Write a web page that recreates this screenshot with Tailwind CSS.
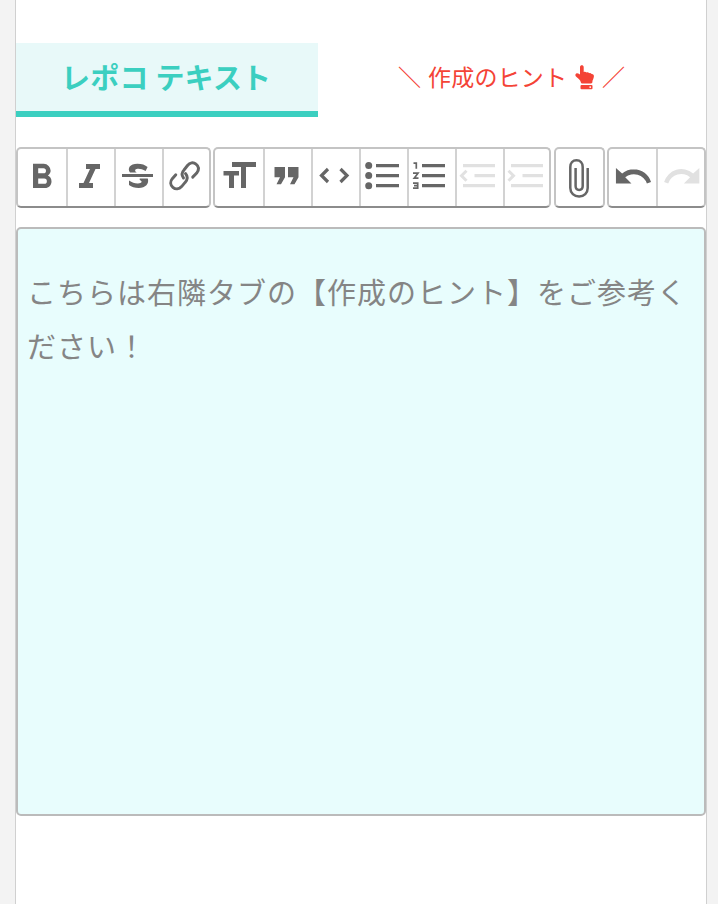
<!DOCTYPE html>
<html lang="ja">
<head>
<meta charset="utf-8">
<title>レポコ テキスト</title>
<script src="https://cdn.jsdelivr.net/npm/@tailwindcss/browser@4"></script>
</head>
<body class="bg-[#f3f3f3] font-['Noto_Sans_CJK_JP',sans-serif]">
<main class="ml-[15px] w-[692px] h-[904px] overflow-hidden bg-white border-x border-[#d0d0d0] pt-[43px]">
  <nav class="flex h-[74px]">
    <div class="w-[302px] h-[74px] border-b-6 border-[#3bcfc0] bg-[#e8f9f9] text-[#3bcfc0] font-bold text-[29px] tracking-[0.2px] leading-[66px] pl-[45px] whitespace-nowrap">レポコ テキスト</div>
    <div class="flex items-center h-[68px] pl-[80px] text-[#f44336] text-[23px] leading-[34px] tracking-[0.2px] whitespace-nowrap">
      <span class="w-[30px] -mt-[2px] font-medium">＼</span><span class="w-[147px] -mt-[2px]">作成のヒント</span>
      <svg class="w-[20px] h-[25px]" viewBox="0 0 20 25" fill="currentColor"><path d="M5 2.200C5 .8 5.900.3 6.800.3S8.700.8 8.700 2.200V7c1-.5 2.200-.2 2.800.5 1-.4 2.200-.1 2.700.7 1-.3 2 .1 2.400.9 1.600-.1 2.500.8 2.300 2.500-.2 2.400-1.500 3.700-1.500 5.200 0 1-.5 1.700-1.400 1.700H7.500c-.9 0-1.500-.5-1.700-1.300C5.500 15 3.500 13.800 1.500 12 .3 10.900.1 9.700.7 8.900c.8-1 2.200-.7 4.300.6z"/><rect x="5.500" y="20" width="12" height="4.300" rx="1"/><circle cx="15.200" cy="22.100" r=".9" fill="white"/></svg>
      <span class="ml-[7px] -mt-[2px] font-medium">／</span>
    </div>
  </nav>

  <div class="flex mt-[30px] h-[61px] text-[#666]">
    <div class="flex w-[195px] rounded-[5px] border-2 border-[#c4c4c4] border-b-[#8c8c8c] overflow-hidden">
      <svg class="w-[48px] h-[58px] shrink-0" viewBox="18 149 48 58" fill="currentColor"><path transform="translate(20.900 155.200) scale(1.730)" d="M15.600 11.800c1-.7 1.600-1.800 1.600-2.800a4 4 0 0 0-4-4H7v14h7c2.100 0 3.700-1.700 3.700-3.800 0-1.500-.8-2.800-2.100-3.400zM10 7.500h3a1.500 1.500 0 1 1 0 3h-3zm3.500 9H10v-3h3.500a1.500 1.500 0 1 1 0 3z"/></svg>
      <div class="w-[48px] border-l-2 border-[#d2d2d2] shrink-0"><svg class="w-[46px] h-[58px]" viewBox="68 149 46 58" fill="currentColor"><path d="M86 164h14v5h-4.500l-6.500 14h4v5H79v-5h4.500l6.500-14h-4z"/></svg></div>
      <div class="w-[48px] border-l-2 border-[#d2d2d2] shrink-0"><svg class="w-[46px] h-[58px]" viewBox="116 149 46 58" fill="currentColor"><path d="M122 174h31v3h-31z"/><path d="M130 172.500c-3-4-.1-8.700 7.400-8.700 4.400 0 7.800 1.200 10.200 3.300l-2 3.900c-3.100-1.900-5.700-2.500-8-2.300-3.100.2-3.100 2.400-.8 3.800z"/><path d="M129 180.500c3.100 2.100 6 3 9 2.900 4.100-.1 4.700-2.100 1.700-3.400v-1.500h8.100c1.600 5.400-2.300 9.400-9 9.400-4 0-7.300-.9-9.800-2.900z"/></svg></div>
      <div class="w-[47px] border-l-2 border-[#d2d2d2] shrink-0"><svg class="w-[45px] h-[58px]" viewBox="164 149 45 58" fill="none" stroke="currentColor" stroke-width="2.900" stroke-linecap="round"><path d="M183.500 178c-2.300-3-1.900-5.400.5-8l3.500-4.500c2.300-2.900 5.800-3.600 8.500-1.300 3.100 2.400 3.100 5.700.7 8.900l-4 4"/><path d="M185.500 173.500c2.400 2.900 2 6.300-.4 8.900l-3.500 4.200c-2.500 2.700-6 3.100-8.700.8-2.800-2.400-2.900-5.800-.6-8.700l3.500-3.900"/></svg></div>
    </div>

    <div class="flex w-[338px] ml-[2px] rounded-[5px] border-2 border-[#c4c4c4] border-b-[#8c8c8c] overflow-hidden">
      <svg class="w-[48px] h-[58px] shrink-0" viewBox="215 149 48 58" fill="currentColor"><path d="M232 162h24v5h-10v21h-5v-21h-9zM223.500 171H239v4.500h-5V188h-5v-12.500h-5.500z"/></svg>
      <div class="w-[48px] border-l-2 border-[#d2d2d2] shrink-0"><svg class="w-[46px] h-[58px]" viewBox="265 149 46 58" fill="currentColor"><path d="M274.500 167H285v10.200l-4 7h-4.500l3.500-7h-5.500zM288 167h10.500v10.200l-4 7H290l3.500-7H288z"/></svg></div>
      <div class="w-[48px] border-l-2 border-[#d2d2d2] shrink-0"><svg class="w-[46px] h-[58px]" viewBox="313 149 46 58" fill="none" stroke="currentColor" stroke-width="3.200"><path d="M328 169l-6.500 6.500 6.500 6.500M340.500 169l6.500 6.500-6.500 6.500"/></svg></div>
      <div class="w-[48px] border-l-2 border-[#d2d2d2] shrink-0"><svg class="w-[46px] h-[58px]" viewBox="361 149 46 58" fill="currentColor"><circle cx="368.700" cy="165.500" r="3.500"/><circle cx="368.700" cy="175.500" r="3.500"/><circle cx="368.700" cy="185.700" r="3.500"/><path d="M376 164h23v3.200h-23zM376 174h23v3.200h-23zM376 184h23v3.200h-23z"/></svg></div>
      <div class="w-[48px] border-l-2 border-[#d2d2d2] shrink-0"><svg class="w-[46px] h-[58px]" viewBox="409 149 46 58" fill="currentColor"><path d="M422 164h23v3.200h-23zM422 174h23v3.200h-23zM422 184h23v3.200h-23z"/><path d="M413.500 163.200h2.800v5.600M413 173.200h5l-3.800 5h4.300M413 183.200h4.700v5H413M414 185.700h3.500" fill="none" stroke="currentColor" stroke-width="1.700"/></svg></div>
      <div class="w-[48px] border-l-2 border-[#d2d2d2] shrink-0 text-[#e1e1e1]"><svg class="w-[46px] h-[58px]" viewBox="457 149 46 58" fill="currentColor"><path d="M463 164h32v3.200h-32zM474.500 174H495v3.200h-20.500zM463 184h32v3.200h-32z"/><path d="M466.500 170.700l-5 5 5 5" fill="none" stroke="currentColor" stroke-width="3"/></svg></div>
      <div class="w-[48px] border-l-2 border-[#d2d2d2] shrink-0 text-[#e1e1e1]"><svg class="w-[46px] h-[58px]" viewBox="505 149 46 58" fill="currentColor"><path d="M511 164h32v3.200h-32zM522.500 174H543v3.200h-20.500zM511 184h32v3.200h-32z"/><path d="M508.500 170.700l5 5-5 5" fill="none" stroke="currentColor" stroke-width="3"/></svg></div>
    </div>

    <div class="w-[51px] ml-[3px] rounded-[5px] border-2 border-[#c4c4c4] border-b-[#8c8c8c]">
      <svg class="w-[47px] h-[58px]" viewBox="556 149 47 58" fill="none" stroke="currentColor" stroke-width="2.500"><path d="M587.700 168v20c0 5-3.600 8.500-8.600 8.500s-8.800-3.500-8.800-8.500v-21c0-4.200 2.500-6.800 6.200-6.800s6.200 2.600 6.200 6.800v19c0 2.500-1.500 3.900-3.600 3.900s-3.500-1.400-3.500-3.900v-18"/></svg>
    </div>

    <div class="flex w-[99px] ml-[2px] rounded-[5px] border-2 border-[#c4c4c4] border-b-[#8c8c8c] overflow-hidden">
      <svg class="w-[47px] h-[58px] shrink-0" viewBox="609 149 47 58" fill="currentColor"><path transform="translate(612.500 155.900) scale(1.720)" d="M12.500 7.700c-2.600 0-5 .9-6.900 2.500L2 7v9h9l-3.600-3.600A8 8 0 0 1 20 16l2.400-.8a10.500 10.500 0 0 0-10-7.500z"/></svg>
      <div class="w-[48px] border-l-2 border-[#d2d2d2] shrink-0 text-[#e1e1e1]"><svg class="w-[46px] h-[58px]" viewBox="658 149 46 58" fill="currentColor"><path transform="translate(661.500 155.900) scale(1.720)" d="M18.400 10.200a10.500 10.500 0 0 0-16.900 5L3.900 16a8 8 0 0 1 12.700-3.600L13 16h9V7z"/></svg></div>
    </div>
  </div>

  <div class="mt-[19px] h-[589px] w-[690px] rounded-[5px] border-2 border-[#bbb] bg-[#e8fdfd] pt-[35px] pl-[9px] text-[#858585] text-[29px] leading-[54px] tracking-[1px] whitespace-nowrap">
    <p>こちらは右隣タブの【作成のヒント】をご参考く</p>
    <p>ださい！</p>
  </div>
</main>
</body>
</html>
